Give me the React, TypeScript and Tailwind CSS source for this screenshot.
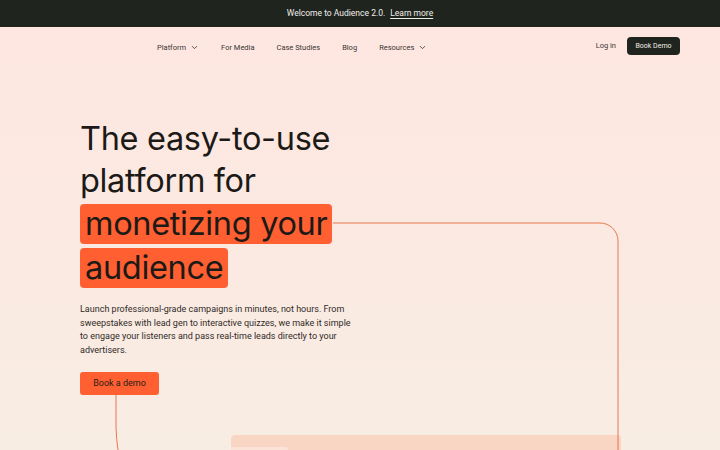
import React from 'react';
import { ChevronDown } from 'lucide-react';

const font = { fontFamily: 'Inter, "Noto Sans", sans-serif' };
const small = { fontFamily: 'Roboto, "Noto Sans", sans-serif' };

function NavLink({ label, caret }: { label: string; caret?: boolean }) {
  return (
    <a className="flex items-center gap-[4px] text-[7.5px] text-[#3a3431]">
      {label}
      {caret && <ChevronDown size={9} strokeWidth={2.2} />}
    </a>
  );
}

export default function App() {
  return (
    <div style={font} className="w-[720px] h-[450px] overflow-hidden relative bg-gradient-to-b from-[#fee6e0] to-[#f8ede3]">
      {/* Announcement bar */}
      <div style={small} className="h-[27px] bg-[#1f241f] flex items-center justify-center gap-[5px] text-[8.5px] text-[#f2efe9]">
        <span>Welcome to Audience 2.0.</span>
        <a className="underline underline-offset-2">Learn more</a>
      </div>

      {/* Nav */}
      <nav style={small} className="h-[38px] flex items-center pl-[157px] pr-[40px]">
        <div className="flex items-center gap-[22px] pt-[3px]">
          <NavLink label="Platform" caret />
          <NavLink label="For Media" />
          <NavLink label="Case Studies" />
          <NavLink label="Blog" />
          <NavLink label="Resources" caret />
        </div>
        <div className="ml-auto flex items-center gap-[11px]">
          <a className="text-[7.5px] text-[#3a3431]">Log in</a>
          <button className="h-[18px] w-[53px] rounded-[4px] bg-[#1f241f] text-[7px] text-[#f2efe9]">Book Demo</button>
        </div>
      </nav>

      {/* Hero */}
      <section className="pl-[80px] pt-[53px] relative z-10">
        <h1 className="text-[32.5px] leading-[42px] text-[#1c1a17] tracking-[-0.01em]">
          <div>The easy-to-use</div>
          <div>platform for</div>
          <div className="mt-[1px]">
            <span className="inline-block bg-[#ff5f31] rounded-[4px] px-[5px] leading-[40px]">monetizing your</span>
          </div>
          <div className="mt-[2px]">
            <span className="inline-block bg-[#ff5f31] rounded-[4px] px-[5px] leading-[40px]">audience</span>
          </div>
        </h1>
        <p style={small} className="mt-[14px] w-[280px] text-[9px] leading-[13.5px] text-[#2f2a27]">
          Launch professional-grade campaigns in minutes, not hours. From sweepstakes with lead gen to interactive quizzes, we make it simple to engage your listeners and pass real-time leads directly to your advertisers.
        </p>
        <button style={small} className="mt-[15px] h-[23px] w-[79px] rounded-[3px] bg-[#ff5f31] text-[9px] text-[#2a1c16]">Book a demo</button>
      </section>

      {/* Preview card peeking at the bottom */}
      <div className="absolute left-[231px] top-[435px] w-[390px] h-[40px] rounded-t-[4px] bg-[#f9d5c3]">
        <div className="mt-[12px] w-[57px] h-[20px] bg-[#fbe3d7] rounded-tr-[3px]" />
      </div>

      {/* Connector lines */}
      <svg className="absolute inset-0 pointer-events-none" width="720" height="450">
        <path d="M333 223 H600 A18 18 0 0 1 618 241 V450" fill="none" stroke="#e9774f" strokeWidth="1" />
        <path d="M116 394 V428 Q116.5 440 118 450" fill="none" stroke="#e9774f" strokeWidth="1" />
      </svg>
    </div>
  );
}
